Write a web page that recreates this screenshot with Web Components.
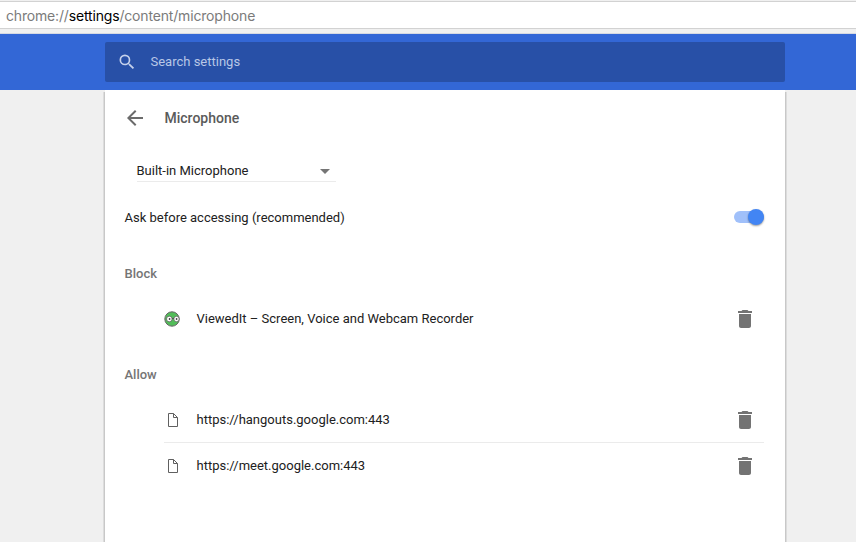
<!DOCTYPE html>
<html lang="en">
<head>
<meta charset="utf-8">
<title>Settings</title>
<style>
html,body{margin:0;height:100%;overflow:hidden;background:#f0f0f0}
body{font-family:Roboto,"Liberation Sans",sans-serif;font-size:13px;color:#212121}
</style>
</head>
<body>
<settings-page></settings-page>
<script>
const define = (name, markup) => {
  const template = document.createElement('template');
  template.innerHTML = markup;
  customElements.define(name, class extends HTMLElement {
    constructor() {
      super();
      this.attachShadow({ mode: 'open' }).append(template.content.cloneNode(true));
    }
  });
};

define('address-bar', `<style>
:host{display:block;box-sizing:border-box;height:34px;padding-top:1px;background:#f0f0f0;border-bottom:1px solid #d6d9e2}
div{box-sizing:border-box;height:28px;border:solid #d2d2d2;border-width:1px 0;background:#fff;padding-left:6px;font:14px/27px Inter,sans-serif;letter-spacing:-.17px;color:#7b7b7b;white-space:nowrap}
b{font-weight:400;color:#000}
</style><div>chrome://<b>settings</b>/content/microphone</div>`);

define('search-bar', `<style>
:host{display:flex;align-items:center;box-sizing:border-box;height:56px;background:#3367d6}
div{display:flex;align-items:center;box-sizing:border-box;width:680px;height:40px;margin-left:105px;border-radius:2px;background:#2850a7;color:#b8c7e6;padding-left:12px}
svg{width:20px;height:20px;fill:#c5d1eb}
span{margin:0 0 2px 13.5px}
</style><div><svg viewBox="0 0 24 24"><path d="M15.5 14h-.79l-.28-.27A6.47 6.47 0 0 0 16 9.5 6.5 6.5 0 1 0 9.5 16c1.61 0 3.09-.59 4.23-1.57l.27.28v.79l5 4.99L20.49 19l-4.99-5zm-6 0a4.5 4.5 0 1 1 0-9 4.5 4.5 0 0 1 0 9z"/></svg><span><slot></slot></span></div>`);

define('page-title', `<style>
:host{display:flex;align-items:center;height:56px;font-size:14px;font-weight:500;color:#5a5a5a}
svg{width:24px;height:24px;margin-left:-1.5px;fill:#6b6b6b}
span{margin-left:17.5px}
</style><svg viewBox="0 0 24 24"><path d="M20 11H7.83l5.59-5.59L12 4l-8 8 8 8 1.41-1.41L7.83 13H20z"/></svg><span><slot></slot></span>`);

define('device-select', `<style>
:host{display:flex;align-items:center;justify-content:space-between;box-sizing:border-box;width:199.5px;height:22px;margin:14px 0 12px 12px;border-bottom:1px solid #ebebeb}
svg{width:10px;height:5px;margin:1px 6px 0 0;fill:#757575}
</style><slot></slot><svg viewBox="0 0 10 5"><path d="M0 0h10L5 5z"/></svg>`);

define('toggle-row', `<style>
:host{display:flex;align-items:center;justify-content:space-between;height:46px}
i{display:flex;justify-content:flex-end;align-items:center;width:30px;height:12px;border-radius:6px;background:#a0c0fa}
i::after{content:"";width:16px;height:16px;border-radius:50%;background:#4285f4;box-shadow:0 1px 2px #0006}
</style><slot></slot><i></i>`);

define('section-label', `<style>
:host{display:flex;align-items:center;box-sizing:border-box;height:55px;padding-top:11px;font-weight:500;color:#757575}
</style><slot></slot>`);

define('site-row', `<style>
:host{display:flex;align-items:center;box-sizing:border-box;height:46px;margin-left:39.5px}
:host([divided]){height:47px;border-bottom:1px solid #ebebeb}
:host(:last-child){height:44px}
.icon{display:flex;width:16px;height:16px;margin:2px 16.5px 0 0}
.bin{width:24px;height:24px;margin:1px 7px 0 auto;fill:#737373}
</style><span class="icon"><slot name="icon"></slot></span><slot></slot>
<svg class="bin" viewBox="0 0 24 24"><path d="M6 19c0 1.1.9 2 2 2h8c1.1 0 2-.9 2-2V7H6zM19 4h-3.5l-1-1h-5l-1 1H5v2h14z"/></svg>`);

define('page-icon', `<style>:host,svg{display:block;width:16px;height:16px}</style>
<svg viewBox="0 0 16 16" fill="#fff" stroke="#606060"><path d="M4.5 1.5h5l4 4v9h-9zM9.5 1.5v4h4"/></svg>`);

define('viewedit-icon', `<style>:host,svg{display:block;width:16px;height:16px}</style>
<svg viewBox="0 0 16 16"><circle cx="8" cy="8" r="7.2" fill="#52bd59" stroke="#666"/>
<g fill="#fff" stroke="#555" stroke-width=".7"><circle cx="5.3" cy="8" r="2.8"/><circle cx="12.5" cy="8" r="2.7"/></g>
<path d="M8 7.5h2" stroke="#555"/><circle cx="5.6" cy="8" r=".9" fill="#444"/><circle cx="12.6" cy="8" r=".9" fill="#444"/></svg>`);

define('settings-card', `<style>
:host{display:block;box-sizing:border-box;width:680px;height:452px;margin-left:105px;padding:0 21px 0 19.5px;background:#fff;box-shadow:0 3px 0 1px #c8c8c8,0 4px 0 2px #dcdcdc}
</style><slot></slot>`);

define('settings-page', `<style>
:host{display:block;height:542px;overflow:hidden}
search-bar{position:relative}
</style>
<address-bar></address-bar>
<search-bar>Search settings</search-bar>
<settings-card>
<page-title>Microphone</page-title>
<device-select>Built-in Microphone</device-select>
<toggle-row>Ask before accessing (recommended)</toggle-row>
<section-label>Block</section-label>
<site-row><viewedit-icon slot="icon"></viewedit-icon>ViewedIt – Screen, Voice and Webcam Recorder</site-row>
<section-label>Allow</section-label>
<site-row divided><page-icon slot="icon"></page-icon>https://hangouts.google.com:443</site-row>
<site-row><page-icon slot="icon"></page-icon>https://meet.google.com:443</site-row>
</settings-card>`);
</script>
</body>
</html>
